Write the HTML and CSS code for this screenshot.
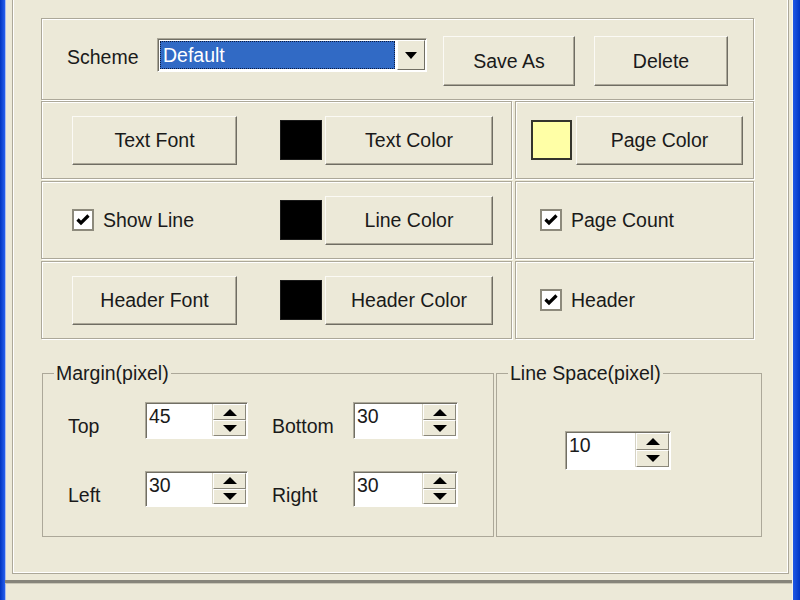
FILE: index.html
```html
<!DOCTYPE html>
<html lang="en">
<head>
    <meta charset="UTF-8">
    <title>Print Options</title>
    <link rel="stylesheet" href="styles.css">
</head>
<body>
<div class="window">
    <div class="frame-left"></div>
    <div class="client">
        <div class="tabpage">

            <!-- scheme selector -->
            <div class="group scheme">
                <span class="scheme-label">Scheme</span>
                <div class="combo">
                    <span class="combo-text">Default</span>
                    <span class="combo-btn"><i class="arrow-down"></i></span>
                </div>
                <button class="btn btn-save">Save As</button>
                <button class="btn btn-delete">Delete</button>
            </div>

            <!-- fonts / colours -->
            <div class="options">
                <div class="group cell cell-left">
                    <div class="slot"><button class="btn btn-font">Text Font</button></div>
                    <span class="swatch"></span>
                    <button class="btn btn-color">Text Color</button>
                </div>
                <div class="group cell cell-right">
                    <span class="swatch swatch-page"></span>
                    <button class="btn btn-page">Page Color</button>
                </div>

                <div class="group cell cell-left">
                    <div class="slot">
                        <label class="check">
                            <svg class="checkbox" viewBox="0 0 22 22"><rect x="1" y="1" width="20" height="20" fill="#fff" stroke="#8d8a7c" stroke-width="2"/><path d="M5.5 10.5l3.5 3.5 7.5-7.5" fill="none" stroke="#000" stroke-width="3.2"/></svg>
                            Show Line
                        </label>
                    </div>
                    <span class="swatch"></span>
                    <button class="btn btn-color">Line Color</button>
                </div>
                <div class="group cell cell-check">
                    <label class="check">
                        <svg class="checkbox" viewBox="0 0 22 22"><rect x="1" y="1" width="20" height="20" fill="#fff" stroke="#8d8a7c" stroke-width="2"/><path d="M5.5 10.5l3.5 3.5 7.5-7.5" fill="none" stroke="#000" stroke-width="3.2"/></svg>
                        Page Count
                    </label>
                </div>

                <div class="group cell cell-left">
                    <div class="slot"><button class="btn btn-font">Header Font</button></div>
                    <span class="swatch"></span>
                    <button class="btn btn-color">Header Color</button>
                </div>
                <div class="group cell cell-check">
                    <label class="check">
                        <svg class="checkbox" viewBox="0 0 22 22"><rect x="1" y="1" width="20" height="20" fill="#fff" stroke="#8d8a7c" stroke-width="2"/><path d="M5.5 10.5l3.5 3.5 7.5-7.5" fill="none" stroke="#000" stroke-width="3.2"/></svg>
                        Header
                    </label>
                </div>
            </div>

            <!-- margins and line space -->
            <div class="bottom">
                <fieldset class="box box-margin">
                    <legend>Margin(pixel)</legend>
                    <div class="margin-grid">
                        <span class="field-label">Top</span>
                        <div class="spin spin-a"><span class="spin-value">45</span><span class="spin-btns"><span class="spin-up"><i class="arrow-up"></i></span><span class="spin-down"><i class="arrow-down"></i></span></span></div>
                        <span class="field-label">Bottom</span>
                        <div class="spin spin-b"><span class="spin-value">30</span><span class="spin-btns"><span class="spin-up"><i class="arrow-up"></i></span><span class="spin-down"><i class="arrow-down"></i></span></span></div>
                        <span class="field-label">Left</span>
                        <div class="spin spin-a"><span class="spin-value">30</span><span class="spin-btns"><span class="spin-up"><i class="arrow-up"></i></span><span class="spin-down"><i class="arrow-down"></i></span></span></div>
                        <span class="field-label">Right</span>
                        <div class="spin spin-b"><span class="spin-value">30</span><span class="spin-btns"><span class="spin-up"><i class="arrow-up"></i></span><span class="spin-down"><i class="arrow-down"></i></span></span></div>
                    </div>
                </fieldset>
                <fieldset class="box box-space">
                    <legend>Line Space(pixel)</legend>
                    <div class="spin spin-space"><span class="spin-value">10</span><span class="spin-btns"><span class="spin-up"><i class="arrow-up"></i></span><span class="spin-down"><i class="arrow-down"></i></span></span></div>
                </fieldset>
            </div>
        </div>
        <div class="statusbar"></div>
    </div>
    <div class="frame-right"></div>
</div>
</body>
</html>
```

FILE: styles.css
```css
body {
    margin: 0;
    width: 800px;
    height: 600px;
    overflow: hidden;
    background: #ece9d8;
    font-family: "Liberation Sans", Arial, sans-serif;
    font-size: 19.5px;
    color: #1a1a1a;
}

.window {
    display: flex;
    height: 600px;
}

.frame-left {
    width: 5px;
    background: linear-gradient(to right, #0033c0, #2660ee);
    border-right: 1px solid #a9bcef;
}

.frame-right {
    width: 7px;
    background: linear-gradient(to right, #1f58e6, #0036c4);
    border-left: 1px solid #f4f3ea;
}

.client {
    flex: 1;
    display: flex;
    flex-direction: column;
}

.tabpage {
    height: 555px;
    margin: 0 3px 0 6px;
    padding: 18px 0 0 28px;
    border: 1px solid #aca899;
    border-top: none;
    box-shadow: inset 1px 0 #fff, inset -1px 0 #fff, inset 0 -1px #fff;
}

.statusbar {
    margin: 6px -1px 0 -1px;
    flex: 1;
    border-top: 3px solid #86847a;
    box-shadow: inset 0 1px #c9c6b6;
}

/* etched group frame */
.group {
    box-sizing: border-box;
    border: 1px solid #aca899;
    box-shadow: inset 1px 1px #fff, 1px 1px #fff;
}

/* ---- scheme row ---- */
.scheme {
    width: 713px;
    height: 82px;
    display: flex;
    align-items: flex-start;
    padding-left: 25px;
}

.scheme-label {
    width: 90px;
    margin-top: 27px;
    line-height: 22px;
}

.combo {
    box-sizing: border-box;
    width: 270px;
    height: 34px;
    margin-top: 19px;
    display: flex;
    padding: 1px;
    background: #fff;
    border: 1px solid;
    border-color: #aca899 #fff #fff #aca899;
    box-shadow: inset 1px 1px #716f64;
}

.combo-text {
    flex: 1;
    margin: 1px 2px 1px 1px;
    padding-left: 2px;
    background: #316ac5;
    color: #fff;
    border: 1px dotted #0c1a40;
    line-height: 26px;
}

.combo-btn {
    width: 28px;
    display: flex;
    align-items: center;
    justify-content: center;
    background: #ece9d8;
    border: 1px solid;
    border-color: #fff #716f64 #716f64 #fff;
    box-sizing: border-box;
}

.combo-btn .arrow-down {
    border-left-width: 6px;
    border-right-width: 6px;
    border-top-width: 7px;
}

.btn {
    box-sizing: border-box;
    height: 49px;
    padding: 0;
    background: #ece9d8;
    border: 1px solid;
    border-color: #fbfaf5 #6f6d63 #6f6d63 #fbfaf5;
    box-shadow: inset -1px -1px #aca899;
    font-family: inherit;
    font-size: 19.5px;
    color: #1a1a1a;
}

.btn-save {
    width: 132px;
    height: 50px;
    margin: 17px 0 0 16px;
}

.btn-delete {
    width: 134px;
    height: 50px;
    margin: 17px 0 0 19px;
}

/* ---- option cells ---- */
.options {
    display: grid;
    grid-template-columns: 471px 239px;
    grid-auto-rows: 78px;
    column-gap: 3px;
    row-gap: 2px;
    margin-top: 1px;
}

.cell {
    display: flex;
    align-items: center;
}

.cell-left {
    padding-left: 30px;
}

.cell-right {
    padding-left: 15px;
}

.cell-check {
    padding-left: 24px;
}

.slot {
    width: 165px;
    margin-right: 43px;
}

.btn-font {
    width: 165px;
}

.btn-color {
    width: 168px;
    margin-left: 3px;
}

.btn-page {
    width: 167px;
    margin-left: 4px;
}

.swatch {
    box-sizing: border-box;
    width: 42px;
    height: 40px;
    background: #000;
    border: 1px solid #1a1a1a;
}

.swatch-page {
    width: 41px;
    background: #ffffa6;
    border: 2px solid #34342c;
}

.check {
    display: flex;
    align-items: center;
    gap: 9px;
    line-height: 22px;
}

.checkbox {
    width: 22px;
    height: 22px;
    flex: none;
}

/* ---- bottom group boxes ---- */
.bottom {
    display: flex;
    gap: 2px;
    margin-top: 23px;
    margin-left: 1px;
}

.box {
    box-sizing: border-box;
    height: 175px;
    margin: 0;
    padding: 18px 0 0 11px;
    border: 1px solid #aca899;
    min-width: 0;
}

.box legend {
    padding: 0 2px;
    line-height: 22px;
}

.box-margin {
    width: 452px;
}

.box-space {
    width: 266px;
}

.margin-grid {
    display: grid;
    grid-template-columns: 77px 103px 24px 81px 105px;
    grid-template-rows: 37px 36px;
    row-gap: 32px;
    margin-left: 14px;
}

.margin-grid .field-label {
    align-self: center;
    padding-top: 11px;
    line-height: 22px;
}

.margin-grid .field-label:nth-child(3),
.margin-grid .field-label:nth-child(7) {
    grid-column: 4;
}

.spin {
    box-sizing: border-box;
    display: flex;
    background: #fff;
    border: 1px solid;
    border-color: #aca899 #fff #fff #aca899;
    box-shadow: inset 1px 1px #716f64;
}

.spin-b {
    grid-column: 5;
}

.spin-space {
    width: 106px;
    height: 39px;
    margin: 29px 0 0 57px;
}

.spin-value {
    flex: 1;
    padding: 2px 0 0 3px;
    line-height: 22px;
}

.spin-btns {
    width: 33px;
    display: flex;
    flex-direction: column;
    margin: 1px 1px 2px 0;
    border-left: 1px solid #d6d3c4;
}

.spin-up,
.spin-down {
    flex: 1;
    display: flex;
    align-items: center;
    justify-content: center;
    background: #ece9d8;
    border: 1px solid;
    border-color: #fff #8a877a #8a877a #fff;
}

/* css triangles */
.arrow-up,
.arrow-down {
    width: 0;
    height: 0;
    border-style: solid;
    border-color: transparent;
}

.arrow-up {
    border-width: 0 7px 7px;
    border-bottom-color: #000;
}

.arrow-down {
    border-width: 7px 7px 0;
    border-top-color: #000;
}
```
